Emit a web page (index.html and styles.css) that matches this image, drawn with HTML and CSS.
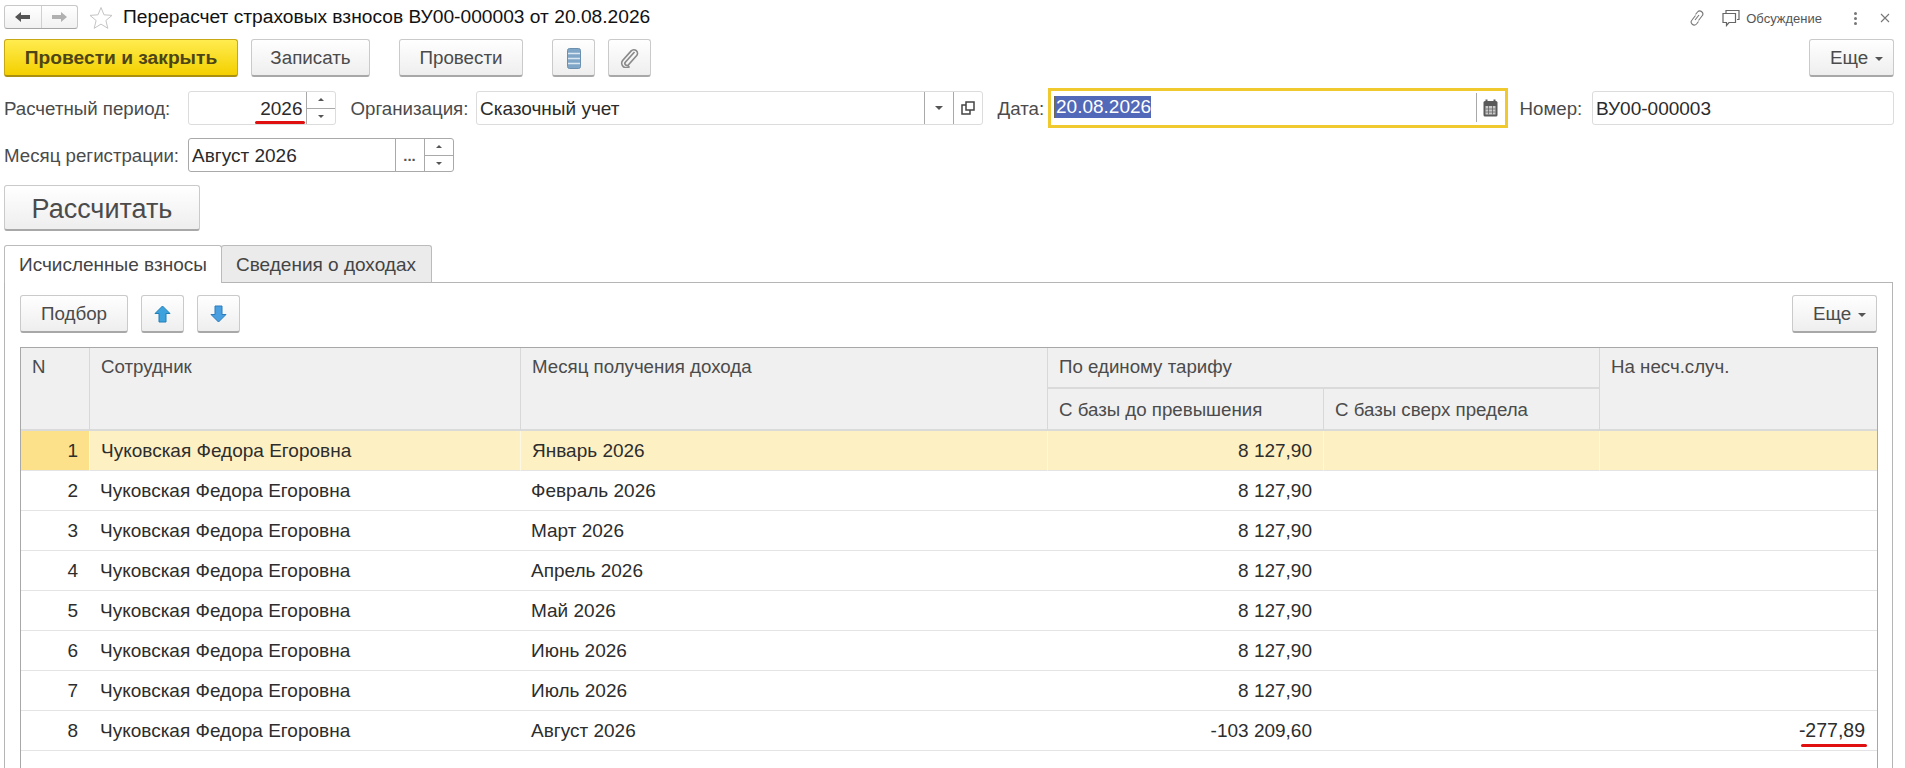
FILE: index.html
```html
<!DOCTYPE html>
<html lang="ru">
<head>
    <meta charset="UTF-8">
    <meta name="viewport" content="width=device-width, initial-scale=1.0">
    <title>Перерасчет страховых взносов</title>
    <link rel="stylesheet" href="styles.css">
</head>
<body>
    <div class="title-row">
        <div class="nav">
            <span class="nav-part">
                <svg width="18" height="14" viewBox="0 0 18 14"><path d="M1 7l6-5v3h9v4H7v3z" fill="#555"/></svg>
            </span>
            <span class="nav-part">
                <svg width="18" height="14" viewBox="0 0 18 14"><path d="M17 7l-6-5v3H2v4h9v3z" fill="#b0b0b0"/></svg>
            </span>
        </div>
        <svg class="star" width="24" height="23" viewBox="0 0 24 23"><path d="M12 1.500l3 7.300 8 .6-6.100 5.100 1.900 7.800L12 18.100l-6.800 4.200 1.900-7.800L1 9.400l8-.6z" fill="#fff" stroke="#c4c4c4"/></svg>
        <h1 class="title">Перерасчет страховых взносов ВУ00-000003 от 20.08.2026</h1>
        <div class="title-tools">
            <svg class="link-icon" width="16" height="18" viewBox="0 0 16 18"><path d="M6.500 6.500L3 11a3 3 0 0 0 4.500 4l2-2.500M9.500 11.500L13 7a3 3 0 0 0-4.500-4l-2 2.500M6 11l4-5" fill="none" stroke="#777" stroke-width="1.100"/></svg>
            <svg class="chat-icon" width="18" height="18" viewBox="0 0 18 18"><path d="M4 4V1.500h13v9h-2M1 4.500h12.500v9H7l-2.500 3v-3H1z" fill="#fff" stroke="#666" stroke-width="1.200"/></svg>
            <span class="discuss">Обсуждение</span>
            <span class="dots"><i></i><i></i><i></i></span>
            <svg class="close-icon" width="10" height="10" viewBox="0 0 10 10"><path d="M1 1l8 8M9 1l-8 8" stroke="#777" stroke-width="1.100"/></svg>
        </div>
    </div>

    <div class="toolbar">
        <button class="btn btn-main">Провести и закрыть</button>
        <button class="btn btn-save">Записать</button>
        <button class="btn btn-post">Провести</button>
        <button class="btn btn-icon btn-list">
            <svg width="14" height="21" viewBox="0 0 14 21">
                <rect x="0.500" y="0.500" width="13" height="20" rx="2" fill="#7fa6c6" stroke="#6b8fae"/>
                <path d="M1 5.500h12M1 10.500h12M1 15.500h12" stroke="#d9e8f2" stroke-width="1.600"/>
            </svg>
        </button>
        <button class="btn btn-icon btn-clip">
            <svg width="19" height="20" viewBox="0 0 19 20"><path d="M14.500 4L5.500 14a2 2 0 0 0 3 2.800l8-9a3.600 3.600 0 0 0-5.300-4.900L2.800 12.300a4.500 4.500 0 0 0 6.700 6" fill="none" stroke="#8a8a8a" stroke-width="1.700"/></svg>
        </button>
        <button class="btn btn-more">Еще<span class="caret"></span></button>
    </div>

    <div class="field-row first">
        <label class="lbl lbl-period">Расчетный период:</label>
        <div class="input input-period">
            <span class="value right">2026</span>
            <span class="spin"><b class="up"></b><b class="down"></b></span>
            <span class="red-line period-line"></span>
        </div>
        <label class="lbl lbl-org">Организация:</label>
        <div class="input input-org">
            <span class="value">Сказочный учет</span>
            <span class="part part-drop"><b class="down"></b></span>
            <span class="part part-open">
                <svg width="14" height="14" viewBox="0 0 14 14"><path d="M5 9V1h8v8zM5 4H1v9h8V9" fill="none" stroke="#444" stroke-width="1.500"/></svg>
            </span>
        </div>
        <label class="lbl lbl-date">Дата:</label>
        <div class="input-focus">
            <span class="value"><span class="selected">20.08.2026</span></span>
            <span class="part part-cal">
                <svg width="15" height="18" viewBox="0 0 15 18">
                    <rect x="0.500" y="2" width="14" height="15.500" rx="1.500" fill="#5a5a5a"/>
                    <path d="M3.500 0.500v3M11.500 0.500v3" stroke="#5a5a5a" stroke-width="2"/>
                    <rect x="2.500" y="7" width="10" height="8.500" fill="#c9c9c9"/>
                    <path d="M5.500 7v8.500M9.500 7v8.500M2.500 10h10M2.500 13h10" stroke="#666" stroke-width="0.800"/>
                </svg>
            </span>
        </div>
        <label class="lbl lbl-num">Номер:</label>
        <div class="input input-num"><span class="value">ВУ00-000003</span></div>
    </div>

    <div class="field-row second">
        <label class="lbl lbl-period">Месяц регистрации:</label>
        <div class="input input-month">
            <span class="value">Август 2026</span>
            <span class="part part-dots">...</span>
            <span class="spin"><b class="up"></b><b class="down"></b></span>
        </div>
    </div>

    <button class="btn btn-calc">Рассчитать</button>

    <div class="tabs">
        <div class="tab active">Исчисленные взносы</div>
        <div class="tab">Сведения о доходах</div>
    </div>

    <div class="panel">
        <div class="panel-tools">
            <button class="btn btn-pick">Подбор</button>
            <button class="btn btn-icon btn-up">
                <svg width="17" height="18" viewBox="0 0 17 18"><path d="M8.500 1L1 8.500h4v8.500h7V8.500h4z" fill="#3ea3dc" stroke="#1f7fb8"/></svg>
            </button>
            <button class="btn btn-icon btn-down">
                <svg width="17" height="18" viewBox="0 0 17 18"><path d="M8.500 17L1 9.500h4V1h7v8.500h4z" fill="#4a9fe0" stroke="#2a7cbc"/></svg>
            </button>
            <button class="btn btn-more">Еще<span class="caret"></span></button>
        </div>

        <table class="grid">
            <colgroup>
                <col class="c-n"><col class="c-emp"><col class="c-month"><col class="c-base"><col class="c-over"><col class="c-acc">
            </colgroup>
            <thead>
                <tr>
                    <th rowspan="2">N</th>
                    <th rowspan="2">Сотрудник</th>
                    <th rowspan="2">Месяц получения дохода</th>
                    <th colspan="2" class="group">По единому тарифу</th>
                    <th rowspan="2">На несч.случ.</th>
                </tr>
                <tr>
                    <th class="sub">С базы до превышения</th>
                    <th class="sub">С базы сверх предела</th>
                </tr>
            </thead>
            <tbody>
                <tr class="current"><td class="num">1</td><td>Чуковская Федора Егоровна</td><td>Январь 2026</td><td class="num">8 127,90</td><td></td><td></td></tr>
                <tr><td class="num">2</td><td>Чуковская Федора Егоровна</td><td>Февраль 2026</td><td class="num">8 127,90</td><td></td><td></td></tr>
                <tr><td class="num">3</td><td>Чуковская Федора Егоровна</td><td>Март 2026</td><td class="num">8 127,90</td><td></td><td></td></tr>
                <tr><td class="num">4</td><td>Чуковская Федора Егоровна</td><td>Апрель 2026</td><td class="num">8 127,90</td><td></td><td></td></tr>
                <tr><td class="num">5</td><td>Чуковская Федора Егоровна</td><td>Май 2026</td><td class="num">8 127,90</td><td></td><td></td></tr>
                <tr><td class="num">6</td><td>Чуковская Федора Егоровна</td><td>Июнь 2026</td><td class="num">8 127,90</td><td></td><td></td></tr>
                <tr><td class="num">7</td><td>Чуковская Федора Егоровна</td><td>Июль 2026</td><td class="num">8 127,90</td><td></td><td></td></tr>
                <tr><td class="num">8</td><td>Чуковская Федора Егоровна</td><td>Август 2026</td><td class="num">-103 209,60</td><td></td><td class="num total">-277,89<span class="red-line total-line"></span></td></tr>
                <tr class="filler"><td colspan="6"></td></tr>
            </tbody>
        </table>
    </div>
</body>
</html>
```

FILE: styles.css
```css
html, body {
    margin: 0;
    height: 768px;
    overflow: hidden;
}

body {
    font-family: 'Liberation Sans', Arial, sans-serif;
    font-size: 19px;
    color: #333;
    background: #fff;
}

.title-row {
    display: flex;
    align-items: center;
    height: 34px;
    margin-bottom: 5px;
    padding-left: 4px;
}

.nav {
    display: flex;
    width: 74px;
    height: 24px;
    box-sizing: border-box;
    border: 1px solid #c8c8c8;
    border-bottom-color: #a5a5a5;
    border-radius: 3px;
    background: linear-gradient(#fff, #f1f1f1);
}

.nav-part {
    flex: 1;
    display: flex;
    align-items: center;
    justify-content: center;
}

.nav-part + .nav-part {
    border-left: 1px solid #d0d0d0;
}

.star {
    margin-left: 11px;
}

.title {
    margin: 0 0 0 10px;
    font-size: 19.200px;
    font-weight: normal;
    color: #111;
}

.title-tools {
    display: flex;
    align-items: center;
    margin-left: auto;
    padding-top: 2px;
    padding-right: 15px;
}

.chat-icon {
    margin-left: 17px;
}

.discuss {
    margin-left: 6px;
    font-size: 13px;
    color: #555;
}

.dots {
    display: flex;
    flex-direction: column;
    gap: 2px;
    margin-left: 32px;
}

.dots i {
    width: 3px;
    height: 3px;
    border-radius: 50%;
    background: #777;
}

.close-icon {
    margin-left: 23px;
}

.btn {
    height: 38px;
    box-sizing: border-box;
    padding: 1px 0 0;
    border: 1px solid #cacaca;
    border-bottom: 2px solid #a8a8a8;
    border-radius: 3px;
    background: linear-gradient(#fff, #eeeeee);
    font-family: inherit;
    font-size: 18.800px;
    color: #4b4b4b;
}

.btn-icon {
    display: flex;
    align-items: center;
    justify-content: center;
    width: 43px;
}

.toolbar {
    display: flex;
    padding-left: 4px;
    padding-right: 11px;
}

.btn-main {
    width: 234px;
    border-color: #c7a815;
    border-bottom-color: #ab9010;
    background: linear-gradient(#ffec4f, #f4d000);
    font-size: 19.200px;
    font-weight: bold;
    color: #4d4516;
}

.btn-save {
    width: 119px;
    margin-left: 13px;
}

.btn-post {
    width: 124px;
    margin-left: 29px;
}

.btn-list {
    margin-left: 29px;
}

.btn-clip {
    margin-left: 13px;
}

.btn-more {
    position: relative;
    width: 85px;
    margin-left: auto;
    padding-left: 20px;
    text-align: left;
}

.caret {
    position: absolute;
    right: 10px;
    top: 17px;
    border: 4px solid transparent;
    border-top-color: #555;
    border-bottom: 0;
}

.field-row {
    display: flex;
    align-items: center;
    padding-left: 4px;
}

.field-row.first {
    height: 40px;
    margin-top: 11px;
}

.field-row.second {
    height: 34px;
    margin-top: 10px;
}

.lbl {
    flex: none;
    padding-top: 1px;
    font-size: 18.700px;
    color: #4b4b4b;
}

.lbl-period {
    width: 183.500px;
}

.lbl-org {
    width: 125px;
    margin-left: 15px;
}

.lbl-date {
    width: 50.500px;
    margin-left: 15px;
}

.lbl-num {
    width: 72px;
    margin-left: 12px;
}

.input {
    position: relative;
    display: flex;
    flex: none;
    height: 34px;
    box-sizing: border-box;
    border: 1px solid #dcdcdc;
    border-radius: 3px;
    background: #fff;
}

.value {
    flex: 1;
    padding-left: 3.500px;
    line-height: 33px;
    color: #2b2b2b;
}

.value.right {
    padding-right: 3px;
    text-align: right;
}

.input-period {
    width: 148px;
}

.input-org {
    width: 507px;
}

.input-num {
    width: 302px;
}

.input-month {
    width: 266px;
    border-color: #a9a9a9;
}

.input-focus {
    display: flex;
    flex: none;
    width: 459.500px;
    height: 40px;
    box-sizing: border-box;
    padding: 2px 0;
    border: 3px solid #f0c92e;
    background: #fff;
}

.input-focus .value {
    padding-left: 3px;
}

.selected {
    display: inline-block;
    height: 22px;
    margin-top: 3px;
    padding-left: 1px;
    border-left: 1px solid #6b6a50;
    background: #5268b8;
    line-height: 22px;
    color: #fff;
    vertical-align: top;
}

.part {
    display: flex;
    flex: none;
    align-items: center;
    justify-content: center;
    border-left: 1px solid #a9a9a9;
}

.part-drop {
    width: 28px;
}

.part-open {
    width: 28px;
}

.part-cal {
    width: 28px;
    margin-bottom: 1px;
}

.part-dots {
    width: 28px;
    font-weight: bold;
    font-size: 15px;
    color: #555;
}

.spin {
    display: flex;
    flex: none;
    flex-direction: column;
    width: 28px;
    border-left: 1px solid #a9a9a9;
}

.spin .up, .spin .down {
    flex: 1;
    align-self: stretch;
}

.spin .up {
    border-bottom: 1px solid #a9a9a9;
}

.up::after, .down::after {
    content: "";
    display: block;
    width: 0;
    height: 0;
    margin: 6px auto 0;
    border: 3px solid transparent;
}

.up::after {
    border-top: 0;
    border-bottom-color: #555;
}

.down::after {
    border-bottom: 0;
    border-top-color: #555;
}

.part-drop .down::after {
    margin-top: 0;
    border-width: 4px;
    border-bottom: 0;
}

.red-line {
    position: absolute;
    height: 3px;
    border-radius: 2px;
    background: #e01010;
}

.period-line {
    left: 66px;
    right: 30px;
    bottom: 0;
}

.btn-calc {
    display: block;
    width: 196px;
    height: 46px;
    margin: 13px 0 14px 4px;
    padding-top: 3px;
    font-size: 27px;
}

.tabs {
    display: flex;
    height: 37px;
    margin-left: 4px;
}

.tab {
    box-sizing: border-box;
    padding: 0 14px;
    border: 1px solid #bbb;
    border-bottom: 0;
    border-radius: 3px 3px 0 0;
    background: #ebebeb;
    line-height: 37px;
    white-space: nowrap;
    color: #444;
}

.tab.active {
    position: relative;
    z-index: 1;
    width: 218px;
    height: 38px;
    background: #fff;
}

.tab + .tab {
    width: 211px;
    margin-left: -1px;
}

.panel {
    width: 1889px;
    height: 520px;
    box-sizing: border-box;
    margin-left: 4px;
    padding: 12px 15px 0;
    border: 1px solid #b5b5b5;
}

.panel-tools {
    display: flex;
    margin-bottom: 14px;
}

.btn-pick {
    width: 108px;
}

.btn-up {
    margin-left: 13px;
}

.btn-down {
    margin-left: 13px;
}

.grid {
    width: 1858px;
    table-layout: fixed;
    border-collapse: separate;
    border-spacing: 0;
    border: 1px solid #a8a8a8;
    border-bottom: 0;
}

.c-n { width: 68px; }
.c-emp { width: 431px; }
.c-month { width: 527px; }
.c-base { width: 276px; }
.c-over { width: 276px; }
.c-acc { width: 278px; }

.grid th {
    padding: 9px 11px 0;
    border-left: 1px solid #d8d8d8;
    border-bottom: 2px solid #dadada;
    background: #f0f0f0;
    font-weight: normal;
    font-size: 18.700px;
    line-height: 20px;
    text-align: left;
    vertical-align: top;
    color: #4b4b4b;
}

.grid tr:first-child th:first-child {
    border-left: 0;
}

.grid th.group {
    height: 30px;
}

.grid th.sub {
    height: 29px;
    padding-top: 11px;
}

.grid td {
    height: 39px;
    box-sizing: border-box;
    padding: 0 11px;
    border-bottom: 1px solid #e4e4e4;
    line-height: 39px;
    white-space: nowrap;
    color: #2d2d2d;
}

.grid td.num {
    text-align: right;
}

.grid td.total {
    position: relative;
    padding-right: 12px;
    font-size: 19.500px;
}

.current td {
    border-left: 1px solid #fdf8e4;
    background: #fdf0c3;
}

.current td:first-child {
    border-left: 0;
    background: #fde08a;
}

.total-line {
    right: 10px;
    bottom: 3px;
    width: 66px;
}

.grid .filler td {
    border-bottom: 0;
}
```
